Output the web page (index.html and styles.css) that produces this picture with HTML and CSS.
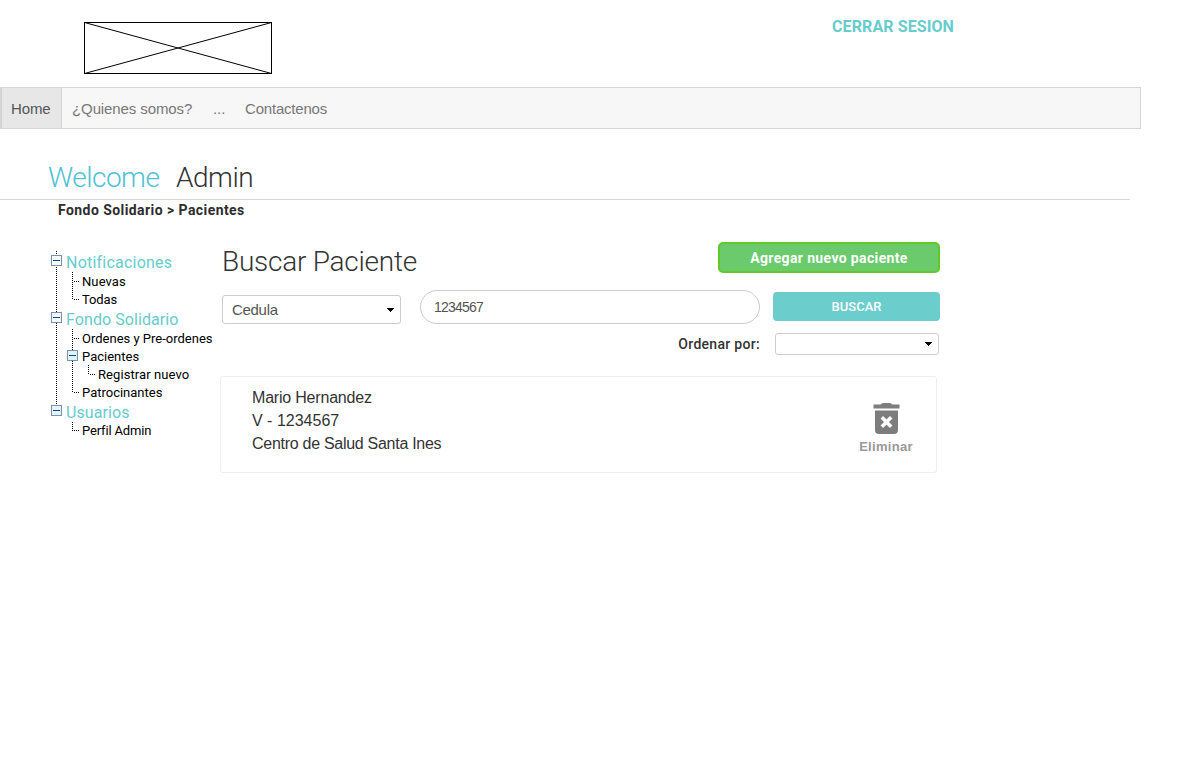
FILE: index.html
```
<!DOCTYPE html>
<html lang="es">
<head>
<meta charset="utf-8">
<title>Pacientes</title>
<link rel="stylesheet" href="styles.css">
</head>
<body>
<header class="top">
  <svg class="logo" width="188" height="52" viewBox="0 0 188 52"><rect x=".5" y=".5" width="187" height="51" fill="#fff" stroke="#000"/><path d="M.5.5l187 51M.5 51.5l187-51" stroke="#000"/></svg>
  <a class="logout">CERRAR SESION</a>
</header>
<nav class="nav">
  <a class="nav-item active">Home</a>
  <a class="nav-item who">¿Quienes somos?</a>
  <a class="nav-item dots">...</a>
  <a class="nav-item contact">Contactenos</a>
</nav>
<h1 class="welcome"><span class="hello">Welcome</span><span class="name">Admin</span></h1>
<div class="crumbs">Fondo Solidario &gt; Pacientes</div>
<div class="layout">
  <aside class="tree">
    <svg class="branches" width="60" height="190" viewBox="50 251 60 190" shape-rendering="crispEdges">
      <defs><linearGradient id="box" x2="1" y2="1"><stop offset="0" stop-color="#fff"/><stop offset="1" stop-color="#cfeefa"/></linearGradient></defs>
      <path class="dotted" d="M56.5 251V405M72.5 272V300M74 281.5H80M74 299.5H80M72.5 329V393M74 338.5H80M74 392.5H80M88.5 365V375M90 374.5H96M72.5 422V431M74 430.5H80"/>
      <g class="toggle">
        <path d="M51.5 255.5h10v10h-10zM51.5 312.5h10v10h-10zM67.5 350.5h10v10h-10zM51.5 405.5h10v10h-10z"/>
        <path class="minus" d="M53 260.5h7M53 317.5h7M69 355.5h7M53 410.5h7"/>
      </g>
    </svg>
    <div class="group g1">Notificaciones</div>
    <div class="leaf l1">Nuevas</div>
    <div class="leaf l2">Todas</div>
    <div class="group g2">Fondo Solidario</div>
    <div class="leaf l3">Ordenes y Pre-ordenes</div>
    <div class="leaf l4">Pacientes</div>
    <div class="leaf deep">Registrar nuevo</div>
    <div class="leaf l5">Patrocinantes</div>
    <div class="group g3">Usuarios</div>
    <div class="leaf l6">Perfil Admin</div>
  </aside>
  <main class="main">
    <div class="title-row">
      <h2 class="title">Buscar Paciente</h2>
      <button class="add">Agregar nuevo paciente</button>
    </div>
    <div class="search-row">
      <div class="select kind"><span>Cedula</span><svg width="7" height="4" viewBox="0 0 7 4" shape-rendering="crispEdges"><path d="M0 0h7v1H6v1H5v1H4v1H3V3H2V2H1V1H0z"/></svg></div>
      <div class="query"><span>1234567</span></div>
      <button class="search">BUSCAR</button>
    </div>
    <div class="sort-row">
      <span class="sort-label">Ordenar por:</span>
      <div class="select order"><svg width="7" height="4" viewBox="0 0 7 4" shape-rendering="crispEdges"><path d="M0 0h7v1H6v1H5v1H4v1H3V3H2V2H1V1H0z"/></svg></div>
    </div>
    <section class="card">
      <div class="patient">
        <div><span class="p1">Mario Hernandez</span></div>
        <div><span class="p2">V - 1234567</span></div>
        <div><span class="p3">Centro de Salud Santa Ines</span></div>
      </div>
      <div class="delete">
        <svg width="28" height="32" viewBox="0 0 28 32"><path fill="#7d7d7d" d="M8.500 1.500q1-1.500 3-1.500h6q2 0 3 1.500h7v4h-26v-4zM3 7.500h23V27q0 4-4 4H7q-4 0-4-4z"/><path d="M9.800 14.300l9.400 9.400M19.200 14.300l-9.400 9.400" stroke="#fff" stroke-width="3.600"/></svg>
        <span>Eliminar</span>
      </div>
    </section>
  </main>
</div>
</body>
</html>
```
FILE: styles.css
```
* { box-sizing: border-box; }
body { margin: 0; background: #fff; color: #333; font-family: Roboto, sans-serif; white-space: nowrap; }
.top { display: flex; justify-content: space-between; width: 954px; height: 87px; padding-left: 84px; }
.logo { margin-top: 22px; }
.logout { margin-top: 17px; font-size: 16px; line-height: 20px; font-weight: 700; letter-spacing: .1px; color: #6cc; }
.nav { display: flex; width: 1141px; height: 42px; border: 1px solid #d4d4d4; border-left-width: 2px; background: #f7f7f7; font: 15px/41px "Liberation Sans", sans-serif; letter-spacing: -.1px; color: #777; }
.nav-item { padding-left: 10px; }
.active { width: 60px; padding-left: 9px; border-right: 1px solid #d4d4d4; background: #e7e7e7; color: #555; }
.who { width: 141px; }
.dots { width: 32px; }
.contact { letter-spacing: -.2px; }
.welcome { display: flex; width: 1130px; height: 71px; margin: 0; padding: 33px 0 0 48px; border-bottom: 1px solid #d8d8d8; font-size: 28px; line-height: 32px; font-weight: 300; letter-spacing: -.5px; }
.hello { width: 128px; color: #4fc1d5; }
.crumbs { height: 42px; padding-left: 58px; font-size: 14px; line-height: 20px; font-weight: 700; letter-spacing: .43px; color: #2d2d2d; }
.layout { display: flex; }
.tree { position: relative; width: 170px; margin-left: 50px; padding-top: 10px; color: #000; }
.branches { position: absolute; left: 0; top: 9px; }
.dotted { fill: none; stroke: #000; stroke-dasharray: 1 1; }
.toggle { fill: url(#box); stroke: #7b8fae; }
.toggle .minus { stroke: #124a80; }
.group { height: 21px; padding-left: 16px; font-size: 16px; line-height: 21px; letter-spacing: .08px; color: #6cc; }
.g1 { letter-spacing: .22px; }
.leaf { height: 18px; padding-left: 32px; font-size: 13px; line-height: 18px; }
.l1 { letter-spacing: .1px; }
.l2 { letter-spacing: -.1px; }
.l6 { margin-top: -1px; letter-spacing: -.15px; }
.deep { padding-left: 48px; letter-spacing: .08px; }
.main { width: 720px; }
.title-row { display: flex; justify-content: space-between; height: 48px; padding-left: 2px; }
.title { margin: 4px 0 0; font-size: 28px; line-height: 32px; font-weight: 300; letter-spacing: -.25px; }
button { padding: 0; font-family: inherit; color: #fff; text-align: center; }
.add { width: 222px; height: 31px; border: 2px solid #62c926; border-radius: 5px; background: #6aca6c; font-size: 14px; font-weight: 700; letter-spacing: .36px; }
.search-row { display: flex; height: 43px; padding-left: 2px; }
.select { display: flex; align-items: center; justify-content: space-between; border: 1px solid #ccc; border-radius: 3px; }
.kind { width: 179px; height: 29px; margin: 5px 19px 0 0; padding: 0 6px 0 9px; font: 15px/27px "Liberation Sans", sans-serif; letter-spacing: -.3px; color: #555; }
.query { width: 340px; height: 34px; padding-left: 13px; border: 1px solid #ccc; border-radius: 17px; font: 14px/33px "Liberation Sans", sans-serif; letter-spacing: -.8px; color: #555; }
.search { width: 167px; height: 29px; margin: 2px 0 0 13px; border: 0; border-radius: 4px; background: #6bcdcc; font-size: 13px; font-weight: 500; }
.sort-row { display: flex; justify-content: flex-end; width: 719px; height: 43px; }
.sort-label { margin-right: 15px; font-size: 14px; line-height: 23px; font-weight: 500; letter-spacing: .3px; }
.order { width: 164px; height: 22px; padding-right: 6px; justify-content: flex-end; }
.card { display: flex; justify-content: space-between; width: 717px; height: 97px; padding: 9px 22px 0 31px; border: 1px solid #eee; border-radius: 3px; }
.patient { font: 16px/23px "Liberation Sans", sans-serif; }
.p1 { letter-spacing: -.2px; }
.p3 { letter-spacing: -.28px; }
.delete { display: flex; flex-direction: column; align-items: center; width: 56px; padding-top: 17px; font: 700 13px/20px "Liberation Sans", sans-serif; letter-spacing: .3px; color: #999; }
.delete svg { margin-bottom: 1px; }
.delete span { margin-top: 1px; }
```
